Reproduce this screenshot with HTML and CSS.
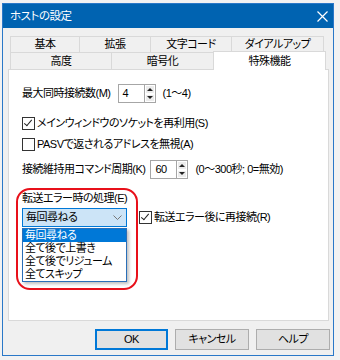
FILE: index.html
```html
<!DOCTYPE html>
<html lang="ja">
<head>
    <meta charset="UTF-8">
    <title>ホストの設定</title>
    <link rel="stylesheet" href="styles.css">
</head>
<body>
    <div class="dialog">
        <div class="titlebar">
            <span class="title">ホストの設定</span>
            <svg class="close" width="11" height="11" viewBox="0 0 11 11">
                <path d="M0.5 0.5 L10.5 10.5 M10.5 0.5 L0.5 10.5" stroke="#fff" stroke-width="1.2" fill="none"/>
            </svg>
        </div>
        <div class="dialog-body">
            <div class="tabs">
                <div class="tab-row row-back">
                    <div class="tab" style="width: 70px;">基本</div>
                    <div class="tab" style="width: 72px;">拡張</div>
                    <div class="tab" style="width: 82px;">文字コード</div>
                    <div class="tab" style="width: 93px;">ダイアルアップ</div>
                </div>
                <div class="tab-row row-front">
                    <div class="tab" style="width: 102px;">高度</div>
                    <div class="tab" style="width: 103px;">暗号化</div>
                    <div class="tab active" style="width: 113px;">特殊機能</div>
                </div>
            </div>

            <div class="panel">
                <div class="field first">
                    <span>最大同時接続数(M)</span>
                    <div class="spin">
                        <div class="spin-value">4</div>
                        <div class="spin-buttons">
                            <div class="spin-btn"><span class="arrow-up"></span></div>
                            <div class="spin-btn"><span class="arrow-down"></span></div>
                        </div>
                    </div>
                    <span class="hint">(1〜4)</span>
                </div>

                <label class="check check-reuse">
                    <span class="box checked"></span>
                    <span>メインウィンドウのソケットを再利用(S)</span>
                </label>
                <label class="check check-pasv">
                    <span class="box"></span>
                    <span>PASVで返されるアドレスを無視(A)</span>
                </label>

                <div class="field keepalive">
                    <span>接続維持用コマンド周期(K)</span>
                    <div class="spin">
                        <div class="spin-value">60</div>
                        <div class="spin-buttons">
                            <div class="spin-btn"><span class="arrow-up"></span></div>
                            <div class="spin-btn"><span class="arrow-down"></span></div>
                        </div>
                    </div>
                    <span class="hint">(0〜300秒; 0=無効)</span>
                </div>

                <div class="error-group">
                    <div class="error-label">転送エラー時の処理(E)</div>
                    <div class="error-row">
                        <div class="select">
                            <span>毎回尋ねる</span>
                            <svg class="chevron" width="9" height="5" viewBox="0 0 9 5">
                                <path d="M0.5 0.5 L4.5 4.5 L8.5 0.5" stroke="#777" stroke-width="1" fill="none"/>
                            </svg>
                            <ul class="dropdown">
                                <li class="selected">毎回尋ねる</li>
                                <li>全て後で上書き</li>
                                <li>全て後でリジューム</li>
                                <li>全てスキップ</li>
                            </ul>
                        </div>
                        <label class="check">
                            <span class="box checked"></span>
                            <span>転送エラー後に再接続(R)</span>
                        </label>
                    </div>
                </div>

                <div class="annotation"></div>
            </div>

            <div class="buttons">
                <button class="btn default">OK</button>
                <button class="btn">キャンセル</button>
                <button class="btn">ヘルプ</button>
            </div>
        </div>
    </div>
</body>
</html>
```

FILE: styles.css
```css
body {
    margin: 0;
    background-color: #f2f2f2;
    font-family: "Liberation Sans", "Noto Sans CJK JP", sans-serif;
    font-size: 11px;
    letter-spacing: -0.5px;
    font-feature-settings: "palt";
    color: #000;
}
.dialog {
    box-sizing: border-box;
    width: 332px;
    height: 353px;
    margin: 3px 0 0 2px;
    border: 1px solid #2a78c8;
    display: flex;
    flex-direction: column;
}
.titlebar {
    height: 24px;
    background-color: #0063b1;
    color: #fff;
    display: flex;
    align-items: center;
    justify-content: space-between;
    padding: 0 5px 0 7px;
}
.title {
    font-size: 11.5px;
    line-height: 14px;
}
.dialog-body {
    flex: 1;
    background-color: #f0f0f0;
    padding: 8px 4px 5px 5px;
}
.tabs {
    display: flex;
    flex-direction: column;
    margin: 0 3px 0 2px;
}
.tab-row {
    display: flex;
}
.tab {
    box-sizing: border-box;
    border: 1px solid #d9d9d9;
    border-bottom: none;
    margin-left: -1px;
    background-color: #f0f0f0;
    display: flex;
    align-items: center;
    justify-content: center;
    line-height: 13px;
}
.tab:first-child {
    margin-left: 0;
}
.row-back .tab {
    height: 16px;
}
.row-front .tab {
    height: 17px;
}
.tab.active {
    height: 19px;
    margin: -1px 0 -1px -1px;
    background-color: #fff;
    position: relative;
    z-index: 1;
}
.panel {
    box-sizing: border-box;
    height: 252px;
    border: 1px solid #d9d9d9;
    background-color: #fff;
    padding: 14px 13px 0 13px;
    position: relative;
}
.field {
    display: flex;
    align-items: center;
    height: 19px;
    line-height: 13px;
}
.spin {
    display: flex;
    margin-left: 7px;
    height: 19px;
}
.keepalive {
    margin-top: 9px;
}
.keepalive .spin {
    margin-left: 5px;
}
.spin-value {
    box-sizing: border-box;
    width: 26px;
    border: 1px solid #a6a6a6;
    border-right: none;
    padding: 0 4px;
    display: flex;
    align-items: center;
}
.spin-buttons {
    box-sizing: border-box;
    width: 12px;
    border: 1px solid #a6a6a6;
    display: flex;
    flex-direction: column;
}
.spin-btn {
    flex: 1;
    background-color: #ececec;
    border: 1px solid #fff;
    display: flex;
    align-items: center;
    justify-content: center;
}
.arrow-up {
    border-left: 3px solid transparent;
    border-right: 3px solid transparent;
    border-bottom: 3px solid #222;
}
.arrow-down {
    border-left: 3px solid transparent;
    border-right: 3px solid transparent;
    border-top: 3px solid #222;
}
.hint {
    margin-left: 7px;
}
.check {
    display: flex;
    align-items: center;
    height: 13px;
    line-height: 13px;
}
.check-reuse {
    margin-top: 14px;
}
.check-pasv {
    margin-top: 8px;
}
.box {
    box-sizing: border-box;
    width: 13px;
    height: 13px;
    border: 1px solid #333;
    background-color: #fff;
    margin-right: 2px;
    flex: none;
    position: relative;
}
.box.checked::after {
    content: "";
    position: absolute;
    left: 3px;
    top: 0px;
    width: 3px;
    height: 7px;
    border: solid #222;
    border-width: 0 1.3px 1.3px 0;
    transform: rotate(40deg);
}
.error-group {
    margin-top: 13px;
}
.error-label {
    line-height: 13px;
}
.error-row {
    display: flex;
    align-items: center;
    margin-top: 3px;
}
.select {
    box-sizing: border-box;
    width: 105px;
    height: 19px;
    border: 1px solid #0078d7;
    background-color: #cce4f7;
    display: flex;
    align-items: center;
    justify-content: space-between;
    padding: 0 4px 0 3px;
    line-height: 13px;
    position: relative;
}
.error-row .check {
    margin-left: 12px;
}
.dropdown {
    list-style: none;
    margin: 0;
    padding: 0;
    position: absolute;
    top: 19px;
    left: -1px;
    width: 105px;
    box-sizing: border-box;
    border: 1px solid #2a6fb8;
    background-color: #fff;
    box-shadow: 2px 2px 3px rgba(0, 0, 0, 0.25);
    z-index: 2;
}
.dropdown li {
    height: 13px;
    line-height: 13px;
    padding-left: 2px;
}
.dropdown li.selected {
    background-color: #0078d7;
    color: #fff;
}
.annotation {
    position: absolute;
    left: 7px;
    top: 118px;
    width: 122px;
    height: 102px;
    box-sizing: border-box;
    border: 2px solid #e8101a;
    border-radius: 14px;
    z-index: 3;
}
.buttons {
    display: flex;
    justify-content: flex-end;
    gap: 7px;
    margin-top: 8px;
    margin-right: -1px;
}
.btn {
    box-sizing: border-box;
    width: 74px;
    height: 21px;
    border: 1px solid #adadad;
    background-color: #e1e1e1;
    font-family: inherit;
    font-size: 11px;
    letter-spacing: -0.5px;
    font-feature-settings: "palt";
    color: #000;
    padding: 0;
    line-height: 13px;
}
.btn.default {
    border: 2px solid #0078d7;
    width: 73px;
}
```
